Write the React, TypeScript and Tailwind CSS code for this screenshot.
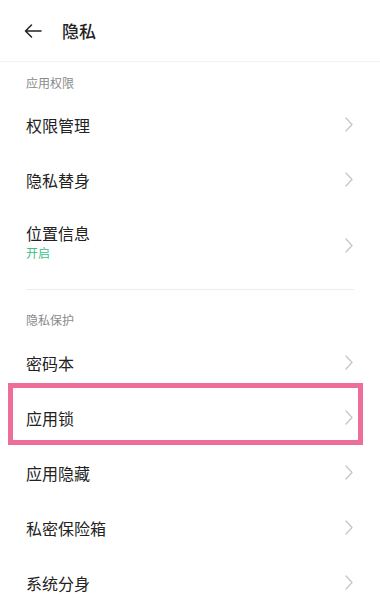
import React from "react";

const Chevron = () => (
  <svg width="8" height="15" viewBox="0 0 8 15" fill="none">
    <path d="M1 1l6 6.5L1 14" stroke="#c6c6c6" strokeWidth="1.3" strokeLinecap="round" strokeLinejoin="round" />
  </svg>
);

interface RowProps {
  title: string;
  sub?: string;
  boxed?: boolean;
}

function Row({title, sub, boxed}: RowProps) {
  return (
    <div className={"relative flex items-center justify-between pl-[26px] pr-[27px] " + (sub ? "h-[68px]" : "h-[55px]")}>
      <div className="flex flex-col">
        <span className="text-[16px] leading-[22px] text-[#222]">{title}</span>
        {sub && <span className="mt-[1px] text-[12px] leading-[16px] text-[#3cbf8c]">{sub}</span>}
      </div>
      <div className={sub ? "mt-[8px]" : ""}>
        <Chevron />
      </div>
      {boxed && <div className="pointer-events-none absolute left-[8px] right-[17px] top-[-7px] bottom-0 border-[5px] border-[#ee6e9b]" />}
    </div>
  );
}

function Label({text, top}: {text: string; top: string}) {
  return (
    <div className={"pl-[26px] text-[12px] leading-[16px] text-[#8a8a8a] " + top}>{text}</div>
  );
}

export default function App() {
  return (
    <div className="w-[380px] h-[600px] overflow-hidden bg-white" style={{fontFamily: '"Noto Sans CJK SC", "Noto Sans", sans-serif'}}>
      <div className="flex h-[62px] items-center border-b border-[#f2f2f2] pl-[24px]">
        <svg width="18" height="14" viewBox="0 0 18 14" fill="none">
          <path d="M17 7H1.5M7.5 1L1.5 7l6 6" stroke="#222" strokeWidth="1.5" strokeLinecap="round" strokeLinejoin="round" />
        </svg>
        <span className="ml-[20px] text-[17px] font-medium text-[#222]">隐私</span>
      </div>
      <Label text="应用权限" top="h-[35px] pt-[13px]" />
      <Row title="权限管理" />
      <Row title="隐私替身" />
      <Row title="位置信息" sub="开启" />
      <div className="mx-[26px] mt-[14px] h-px bg-[#ececec]" />
      <Label text="隐私保护" top="h-[45px] pt-[22px]" />
      <Row title="密码本" />
      <Row title="应用锁" boxed />
      <Row title="应用隐藏" />
      <Row title="私密保险箱" />
      <Row title="系统分身" />
    </div>
  );
}
